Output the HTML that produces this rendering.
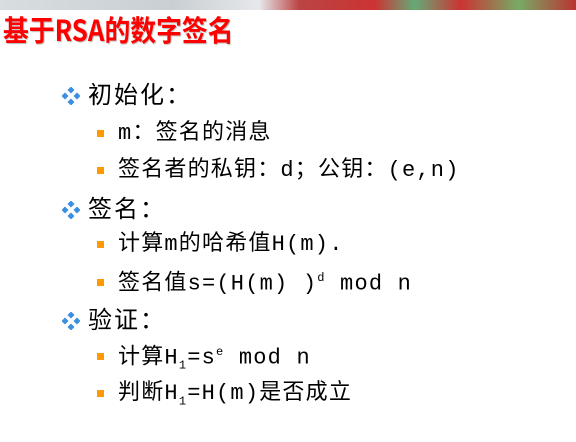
<!DOCTYPE html>
<html><head><meta charset="utf-8"><style>
body{margin:0;width:576px;height:442px;background:#fff;position:relative;overflow:hidden;font-family:"WenQuanYi Zen Hei Mono","Liberation Mono","WenQuanYi Zen Hei","Noto Sans CJK SC",monospace;}
.banner{position:absolute;left:0;top:0;width:576px;height:10px;background:linear-gradient(90deg,#d8dde0 0%,#c9cfd3 30%,#e6e8ea 45%,#b44 52%,#c33 65%,#6a7 72%,#c33 80%,#7a6 90%,#b33 100%);}
.t{position:absolute;white-space:nowrap;line-height:1;}
.title{left:3px;top:15px;font-size:29px;color:#f00;font-weight:bold;text-shadow:1px 1px 1px #bbb;transform:scaleX(0.89);transform-origin:0 0;font-family:"WenQuanYi Zen Hei","Noto Sans CJK SC",sans-serif;}
.l1{font-size:24px;color:#000;left:88px;letter-spacing:2px;}
.l2{font-size:22px;color:#000;left:118px;letter-spacing:1.2px;}
.dm{position:absolute;width:18px;height:18px;}
.sq{position:absolute;left:97px;width:7px;height:7px;background:#f90;}
sub,sup{font-size:12px;}
</style></head><body>
<div class="banner"></div>
<div class="t title">基于RSA的数字签名</div>

<svg class="dm" style="left:62px;top:87px" viewBox="0 0 18 18"><g fill="#3b8fe0"><rect x="6.5" y="0.5" width="5" height="5" transform="rotate(45 9 3)"/><rect x="0.5" y="6.5" width="5" height="5" transform="rotate(45 3 9)"/><rect x="12.5" y="6.5" width="5" height="5" transform="rotate(45 15 9)"/><rect x="6.5" y="12.5" width="5" height="5" transform="rotate(45 9 15)"/></g></svg>
<div class="t l1" style="top:86px">初始化：</div>
<div class="sq" style="top:130px"></div>
<div class="t l2" style="top:123px">m：签名的消息</div>
<div class="sq" style="top:167px"></div>
<div class="t l2" style="top:160px">签名者的私钥：d；公钥：(e,n)</div>

<svg class="dm" style="left:62px;top:201px" viewBox="0 0 18 18"><g fill="#3b8fe0"><rect x="6.5" y="0.5" width="5" height="5" transform="rotate(45 9 3)"/><rect x="0.5" y="6.5" width="5" height="5" transform="rotate(45 3 9)"/><rect x="12.5" y="6.5" width="5" height="5" transform="rotate(45 15 9)"/><rect x="6.5" y="12.5" width="5" height="5" transform="rotate(45 9 15)"/></g></svg>
<div class="t l1" style="top:200px">签名：</div>
<div class="sq" style="top:241px"></div>
<div class="t l2" style="top:234px">计算m的哈希值H(m).</div>
<div class="sq" style="top:279px"></div>
<div class="t l2" style="top:272px">签名值s=(H(m) )<sup>d</sup> mod n</div>

<svg class="dm" style="left:62px;top:312px" viewBox="0 0 18 18"><g fill="#3b8fe0"><rect x="6.5" y="0.5" width="5" height="5" transform="rotate(45 9 3)"/><rect x="0.5" y="6.5" width="5" height="5" transform="rotate(45 3 9)"/><rect x="12.5" y="6.5" width="5" height="5" transform="rotate(45 15 9)"/><rect x="6.5" y="12.5" width="5" height="5" transform="rotate(45 9 15)"/></g></svg>
<div class="t l1" style="top:311px">验证：</div>
<div class="sq" style="top:353px"></div>
<div class="t l2" style="top:346px">计算H<sub>1</sub>=s<sup>e</sup> mod n</div>
<div class="sq" style="top:390px"></div>
<div class="t l2" style="top:383px">判断H<sub>1</sub>=H(m)是否成立</div>
</body></html>
